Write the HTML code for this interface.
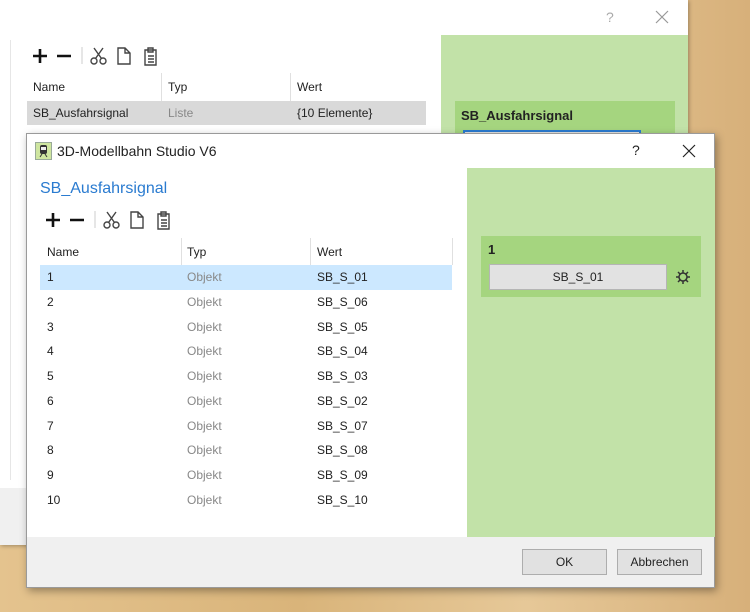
<!DOCTYPE html>
<html><head><meta charset="utf-8"><style>
*{margin:0;padding:0;box-sizing:border-box}
body{width:750px;height:612px;overflow:hidden;position:relative;font-family:"Liberation Sans",sans-serif;font-size:12px;color:#222;background:linear-gradient(90deg,#e4c38e,#d9b47a 40%,#e6c898 70%,#d7b07a)}
.abs{position:absolute}
.t{position:absolute;white-space:nowrap}
.g{color:#888}
</style></head><body>
<!-- back window -->
<div class="abs" style="left:0;top:0;width:688px;height:545px;background:#fff;box-shadow:1px 1px 4px rgba(0,0,0,.3)"></div>
<div class="abs" style="left:0;top:488px;width:688px;height:57px;background:#f0f0f0"></div>
<div class="abs" style="left:10px;top:40px;width:1px;height:440px;background:#e6e6e6"></div>
<div class="t" style="left:606px;top:9px;font-size:14px;color:#aaa">?</div>
<svg class="abs" style="left:655px;top:10px" width="14" height="14"><path d="M1 1L13 13M13 1L1 13" stroke="#999" stroke-width="1.2"/></svg>
<div class="abs" style="left:441px;top:35px;width:247px;height:110px;background:#c2e2a8"></div>
<div class="abs" style="left:455px;top:101px;width:220px;height:44px;background:#a5d57f"></div>
<div class="t" style="left:461px;top:108px;font-weight:bold;font-size:13px">SB_Ausfahrsignal</div>
<div class="abs" style="left:463px;top:130px;width:178px;height:5px;border:2px solid #2a7bd0;border-bottom:none;background:#e2e2e2"></div>
<svg class="abs" style="left:30px;top:44px" width="135" height="24">
<path d="M3 12H17M10 5V19M27 12H41" stroke="#111" stroke-width="2.6"/>
<path d="M52 3V20" stroke="#ccc"/>
<g fill="none" stroke="#444" stroke-width="1.4"><circle cx="64" cy="17" r="3"/><circle cx="73" cy="17" r="3"/><path d="M65.5 14.5L73 4M71.5 14.5L64 4"/>
<path d="M88 4H95L100 9V20H88Z M95 4V9H100"/>
<path d="M115 6H126V21H115Z M118 4H123V8H118Z M118 12H124M118 15H124M118 18H124"/></g></svg>
<div class="abs" style="left:161px;top:73px;width:1px;height:28px;background:#e0e0e0"></div>
<div class="abs" style="left:290px;top:73px;width:1px;height:28px;background:#e0e0e0"></div>
<div class="t" style="left:33px;top:80px">Name</div>
<div class="t" style="left:168px;top:80px">Typ</div>
<div class="t" style="left:297px;top:80px">Wert</div>
<div class="abs" style="left:27px;top:101px;width:399px;height:24px;background:#d9d9d9"></div>
<div class="t" style="left:33px;top:106px">SB_Ausfahrsignal</div>
<div class="t g" style="left:168px;top:106px">Liste</div>
<div class="t" style="left:297px;top:106px">{10 Elemente}</div>
<!-- front dialog -->
<div class="abs" style="left:26px;top:133px;width:689px;height:455px;background:#fff;border:1px solid #9a9a9a;box-shadow:2px 3px 8px rgba(0,0,0,.35)"></div>
<svg class="abs" style="left:35px;top:142px" width="17" height="18"><rect x=".5" y=".5" width="16" height="17" fill="#cfe6a0" stroke="#9a9"/><rect x="5" y="3" width="7" height="9" rx="2" fill="#333"/><rect x="6" y="5" width="5" height="3" fill="#eee"/><path d="M5 15L7 12M12 15L10 12" stroke="#333"/></svg>
<div class="t" style="left:57px;top:143px;font-size:14px">3D-Modellbahn Studio V6</div>
<div class="t" style="left:632px;top:142px;font-size:14px">?</div>
<svg class="abs" style="left:682px;top:144px" width="14" height="14"><path d="M1 1L13 13M13 1L1 13" stroke="#222" stroke-width="1.2"/></svg>
<div class="abs" style="left:467px;top:168px;width:248px;height:369px;background:#c2e2a8"></div>
<div class="abs" style="left:481px;top:236px;width:220px;height:61px;background:#a5d57f"></div>
<div class="t" style="left:488px;top:242px;font-weight:bold;font-size:13px">1</div>
<div class="abs" style="left:489px;top:264px;width:178px;height:26px;background:#e2e2e2;border:1px solid #b5b5b5;text-align:center;line-height:24px">SB_S_01</div>
<svg class="abs" style="left:675px;top:269px" width="16" height="16" viewBox="0 0 16 16"><g fill="none" stroke="#333" stroke-width="1.5"><circle cx="8" cy="8" r="4"/><path d="M8 1V4M8 12V15M1 8H4M12 8H15M3 3L5 5M11 11L13 13M13 3L11 5M5 11L3 13"/></g></svg>
<div class="t" style="left:40px;top:180px;font-size:16px;color:#2a7bd0">SB_Ausfahrsignal</div>
<svg class="abs" style="left:43px;top:208px" width="135" height="24">
<path d="M3 12H17M10 5V19M27 12H41" stroke="#111" stroke-width="2.6"/>
<path d="M52 3V20" stroke="#ccc"/>
<g fill="none" stroke="#444" stroke-width="1.4"><circle cx="64" cy="17" r="3"/><circle cx="73" cy="17" r="3"/><path d="M65.5 14.5L73 4M71.5 14.5L64 4"/>
<path d="M88 4H95L100 9V20H88Z M95 4V9H100"/>
<path d="M115 6H126V21H115Z M118 4H123V8H118Z M118 12H124M118 15H124M118 18H124"/></g></svg>
<div class="abs" style="left:181px;top:238px;width:1px;height:27px;background:#e0e0e0"></div>
<div class="abs" style="left:310px;top:238px;width:1px;height:27px;background:#e0e0e0"></div>
<div class="abs" style="left:452px;top:238px;width:1px;height:27px;background:#e0e0e0"></div>
<div class="t" style="left:47px;top:245px">Name</div>
<div class="t" style="left:187px;top:245px">Typ</div>
<div class="t" style="left:317px;top:245px">Wert</div>
<div class="abs" style="left:40px;top:265px;width:412px;height:25px;background:#cce8ff"></div>
<div class="t" style="left:47px;top:265px;line-height:24.75px">1<br>2<br>3<br>4<br>5<br>6<br>7<br>8<br>9<br>10</div>
<div class="t g" style="left:187px;top:265px;line-height:24.75px">Objekt<br>Objekt<br>Objekt<br>Objekt<br>Objekt<br>Objekt<br>Objekt<br>Objekt<br>Objekt<br>Objekt</div>
<div class="t" style="left:317px;top:265px;line-height:24.75px">SB_S_01<br>SB_S_06<br>SB_S_05<br>SB_S_04<br>SB_S_03<br>SB_S_02<br>SB_S_07<br>SB_S_08<br>SB_S_09<br>SB_S_10</div>
<div class="abs" style="left:27px;top:537px;width:687px;height:50px;background:#f0f0f0"></div>
<div class="abs" style="left:522px;top:549px;width:85px;height:26px;background:#e1e1e1;border:1px solid #adadad;text-align:center;line-height:24px">OK</div>
<div class="abs" style="left:617px;top:549px;width:85px;height:26px;background:#e1e1e1;border:1px solid #adadad;text-align:center;line-height:24px">Abbrechen</div>
</body></html>
